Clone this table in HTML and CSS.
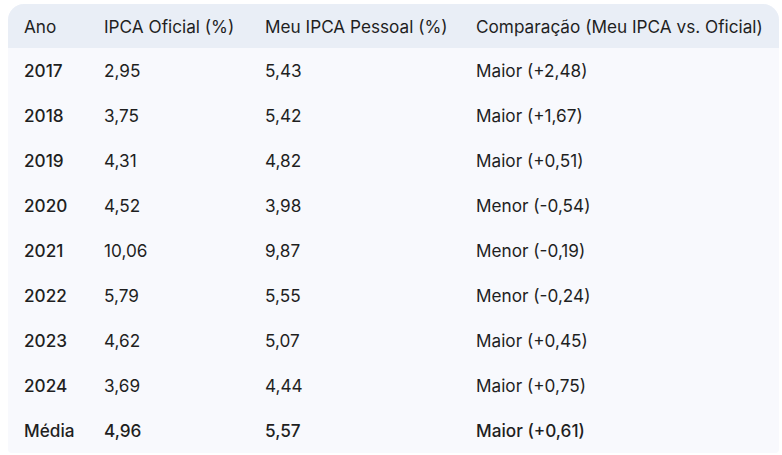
FILE: index.html
```html
<!DOCTYPE html>
<html lang="pt-BR">
<head>
<meta charset="utf-8">
<title>IPCA</title>
<link rel="stylesheet" href="styles.css">
</head>
<body>
<div class="wrap">
<table class="tbl">
<thead>
<tr><th class="c1">Ano</th><th class="c2">IPCA Oficial (%)</th><th class="c3">Meu IPCA Pessoal (%)</th><th class="c4">Comparação (Meu IPCA vs. Oficial)</th></tr>
</thead>
<tbody>
<tr><td class="yr">2017</td><td>2,95</td><td>5,43</td><td>Maior (+2,48)</td></tr>
<tr><td class="yr">2018</td><td>3,75</td><td>5,42</td><td>Maior (+1,67)</td></tr>
<tr><td class="yr">2019</td><td>4,31</td><td>4,82</td><td>Maior (+0,51)</td></tr>
<tr><td class="yr">2020</td><td>4,52</td><td>3,98</td><td>Menor (-0,54)</td></tr>
<tr><td class="yr">2021</td><td>10,06</td><td>9,87</td><td>Menor (-0,19)</td></tr>
<tr><td class="yr">2022</td><td>5,79</td><td>5,55</td><td>Menor (-0,24)</td></tr>
<tr><td class="yr">2023</td><td>4,62</td><td>5,07</td><td>Maior (+0,45)</td></tr>
<tr><td class="yr">2024</td><td>3,69</td><td>4,44</td><td>Maior (+0,75)</td></tr>
<tr class="avg"><td>Média</td><td>4,96</td><td>5,57</td><td>Maior (+0,61)</td></tr>
</tbody>
</table>
</div>
</body>
</html>
```
FILE: styles.css
```css
html, body {
  margin: 0;
  padding: 0;
  background: #ffffff;
}
.wrap {
  padding: 4px 3px 0 8px;
}
.tbl {
  width: 771px;
  border-collapse: separate;
  border-spacing: 0;
  table-layout: fixed;
  font-family: Inter, Roboto, "Noto Sans", sans-serif;
  font-size: 17.2px;
  color: #1f1f1f;
  background: #f8f9fd;
  border-radius: 16px 16px 4px 4px;
  overflow: hidden;
}
.tbl th, .tbl td {
  box-sizing: border-box;
  text-align: left;
  padding: 0 16px;
  white-space: nowrap;
}
.tbl th {
  background: #e9eef6;
  font-weight: 400;
  height: 44px;
}
.tbl td {
  height: 45px;
}
.c1 { width: 80px; }
.c2 { width: 161px; }
.c3 { width: 211px; }
.c4 { width: auto; }
.yr { font-weight: 500; }
.avg td { font-weight: 500; }
```
